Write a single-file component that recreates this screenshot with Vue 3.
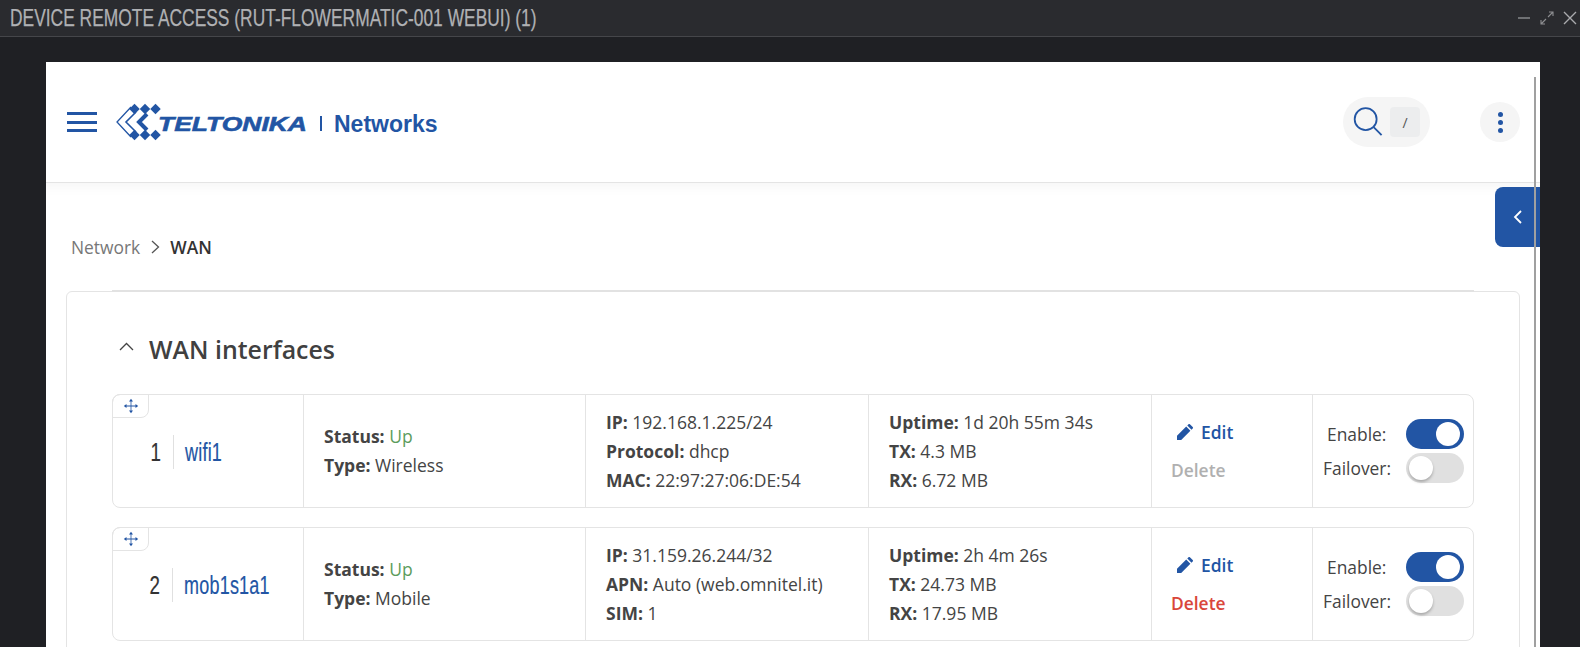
<script setup>
const rows = [
  {
    n: 1, name: 'wifi1',
    a: [['Status:', 'Up', true], ['Type:', 'Wireless']],
    b: [['IP:', '192.168.1.225/24'], ['Protocol:', 'dhcp'], ['MAC:', '22:97:27:06:DE:54']],
    c: [['Uptime:', '1d 20h 55m 34s'], ['TX:', '4.3 MB'], ['RX:', '6.72 MB']],
    del: false
  },
  {
    n: 2, name: 'mob1s1a1',
    a: [['Status:', 'Up', true], ['Type:', 'Mobile']],
    b: [['IP:', '31.159.26.244/32'], ['APN:', 'Auto (web.omnitel.it)'], ['SIM:', '1']],
    c: [['Uptime:', '2h 4m 26s'], ['TX:', '24.73 MB'], ['RX:', '17.95 MB']],
    del: true
  }
]
const diamonds = [[134.5, 109], [145, 109], [155.5, 109], [134.5, 135], [145, 135], [155.5, 135]]
</script>

<template>
  <div class="root">
    <div class="titlebar">
      <span class="title">DEVICE REMOTE ACCESS (RUT-FLOWERMATIC-001 WEBUI) (1)</span>
      <div class="winbtns">
        <svg width="14" height="14" viewBox="0 0 14 14"><path d="M1 7h12" stroke="#8d8e91" stroke-width="1.4" /></svg>
        <svg width="14" height="14" viewBox="0 0 14 14" fill="none" stroke="#8d8e91" stroke-width="1.1"><path d="M8 6l5-5M9 1h4v4M6 8l-5 5M1 9v4h4" /></svg>
        <svg width="14" height="14" viewBox="0 0 14 14"><path d="M1 1l12 12M13 1L1 13" stroke="#a9aaad" stroke-width="1.4" /></svg>
      </div>
    </div>
    <div class="stage">
      <div class="panel">
        <header class="head">
          <div class="burger"><i></i><i></i><i></i></div>
          <div class="logo">
            <svg class="mark" width="46" height="40" viewBox="115 102 46 40">
              <g fill="#2255a4">
                <rect v-for="(d, i) in diamonds" :key="i" :x="d[0] - 3.7" :y="d[1] - 3.7" width="7.4" height="7.4" :transform="`rotate(45 ${d[0]} ${d[1]})`" />
              </g>
              <g fill="none" stroke="#2255a4">
                <path d="M131 107L117 122l14 15" stroke-width="1.3" />
                <path d="M136 112L126 122l10 10" stroke-width="1.6" />
                <path d="M147 114L139 122l8 8" stroke-width="4" />
              </g>
            </svg>
            <span class="brand"><span class="brand-in">TELTONIKA</span></span>
            <span class="sep"></span>
            <span class="net">Networks</span>
          </div>
          <div class="spacer"></div>
          <div class="search">
            <svg width="30" height="30" viewBox="0 0 32 32" fill="none" stroke="#2255a4" stroke-width="1.9"><circle cx="13.5" cy="13" r="11.7" /><path d="M22 21.500l8.500 8.500" /></svg>
            <span class="slash">/</span>
          </div>
          <div class="more"><i></i><i></i><i></i></div>
        </header>
        <div class="content">
          <nav class="crumbs">
            <span class="c1">Network</span>
            <svg width="10" height="14" viewBox="0 0 10 14" fill="none" stroke="#555" stroke-width="1.3"><path d="M2 1l6.500 6L2 13" /></svg>
            <span class="c2">WAN</span>
          </nav>
          <section class="card">
            <div class="topline"></div>
            <h2 class="h"><svg width="15" height="9" viewBox="0 0 15 9" fill="none" stroke="#444" stroke-width="1.3"><path d="M1 8l6.500-6.500L14 8" /></svg><span>WAN interfaces</span></h2>
            <div v-for="r in rows" :key="r.n" class="row">
              <div class="cell first">
                <div class="drag">
                  <svg width="16" height="16" viewBox="0 0 16 16" fill="#2255a4"><path d="M7.600 3h.8v10h-.8zM3 7.600h10v.8H3z" /><path d="M8 .8l2 2.700H6zM8 15.200l2-2.700H6zM.8 8l2.700-2v4zM15.200 8l-2.700-2v4z" /></svg>
                </div>
                <div class="num"><span>{{ r.n }}</span></div>
                <span class="name">{{ r.name }}</span>
              </div>
              <div class="cell info">
                <div v-for="l in r.a" :key="l[0]"><b>{{ l[0] }}</b> <span :class="{ up: l[2] }">{{ l[1] }}</span></div>
              </div>
              <div class="cell info">
                <div v-for="l in r.b" :key="l[0]"><b>{{ l[0] }}</b> {{ l[1] }}</div>
              </div>
              <div class="cell info">
                <div v-for="l in r.c" :key="l[0]"><b>{{ l[0] }}</b> {{ l[1] }}</div>
              </div>
              <div class="cell actions">
                <div class="edit">
                  <svg width="16" height="16" viewBox="0 0 16 16" fill="#2255a4"><path d="M0 16v-4.200L9.200 2.600l4.200 4.200L4.200 16zM10.300 1.500L11.500.3a1 1 0 0 1 1.400 0l2.800 2.800a1 1 0 0 1 0 1.400l-1.200 1.200z" /></svg>
                  <span>Edit</span>
                </div>
                <div class="del" :class="{ on: r.del }">Delete</div>
              </div>
              <div class="cell toggles">
                <div class="tg"><span class="lab l1">Enable:</span><span class="sw on"><i></i></span></div>
                <div class="tg"><span class="lab">Failover:</span><span class="sw"><i></i></span></div>
              </div>
            </div>
          </section>
        </div>
        <div class="tab"><svg width="10" height="14" viewBox="0 0 10 14" fill="none" stroke="#fff" stroke-width="1.8"><path d="M8 1L2 7l6 6" /></svg></div>
        <div class="scroll"></div>
      </div>
    </div>
  </div>
</template>

<style scoped>
.root { width: 1580px; height: 647px; overflow: hidden; background: #1f2024; display: flex; flex-direction: column; font-family: "Open Sans", sans-serif; color: #404040; }
.titlebar { height: 36px; flex: none; background: #2a2b2f; border-bottom: 1px solid #45464a; display: flex; align-items: center; justify-content: space-between; padding: 0 3px 0 10px; }
.title { display: inline-block; font-family: "Liberation Sans", sans-serif; font-size: 24px; color: #b0b1b4; white-space: nowrap; transform: scaleX(0.725); transform-origin: left center; width: 530px; -webkit-text-stroke: 0.25px #b0b1b4; }
.winbtns { display: flex; gap: 9px; align-items: center; margin-top: -1px; }
.stage { flex: 1; padding: 25px 40px 0 46px; min-height: 0; }
.panel { position: relative; height: 100%; background: #fff; overflow: hidden; }
.head { height: 120px; border-bottom: 1px solid #e4e4e4; display: flex; align-items: center; padding: 0 20px 0 21px; }
.burger { width: 30px; height: 20px; display: flex; flex-direction: column; justify-content: space-between; }
.burger i { display: block; height: 3px; background: #2255a4; }
.logo { display: flex; align-items: center; margin-left: 18px; color: #2255a4; padding-top: 1px; }
.mark { margin-top: -1px; }
.brand { width: 151px; margin-left: -3px; padding-top: 2px; font-family: "Liberation Sans", sans-serif; font-style: italic; font-weight: 700; font-size: 21px; white-space: nowrap; }
.brand-in { display: inline-block; transform: scaleX(1.26); transform-origin: left center; -webkit-text-stroke: 0.6px #2255a4; }
.sep { width: 2px; height: 15px; margin: 2px 12px 0 11px; background: #2255a4; }
.net { font-family: "Liberation Sans", sans-serif; font-weight: 700; font-size: 23px; padding-top: 3px; }
.spacer { flex: 1; }
.search { width: 87px; height: 50px; border-radius: 25px; background: #f5f5f5; display: flex; align-items: center; padding-left: 10px; gap: 7px; box-sizing: border-box; }
.slash { width: 30px; height: 30px; border-radius: 4px; background: #ecedee; font-size: 14px; display: flex; align-items: center; justify-content: center; color: #555; }
.more { width: 40px; height: 40px; border-radius: 50%; background: #f5f5f5; margin-left: 50px; display: flex; flex-direction: column; align-items: center; justify-content: center; gap: 3px; }
.more i { width: 5px; height: 5px; border-radius: 50%; background: #2255a4; }
.content { padding: 50px 20px 0 20px; box-shadow: inset 0 16px 14px -14px rgba(0, 0, 0, 0.05); }
.crumbs { display: flex; align-items: center; height: 28px; padding-left: 5px; font-size: 17.4px; gap: 10px; margin-bottom: 30px; }
.c1 { color: #777; }
.c2 { font-weight: 600; color: #333; }
.card { position: relative; border: 1px solid #e4e4e4; border-radius: 6px; padding: 0 45px; height: 500px; box-sizing: border-box; }
.topline { position: absolute; left: 45px; right: 45px; top: -2px; height: 2px; background: #e2e2e2; }
.h { display: flex; align-items: center; height: 36px; margin: 39px 0 27px; font-size: 24.9px; font-weight: 600; color: #404040; }
.h svg { margin: 0 15px 5px 7px; }
.row { display: grid; grid-template-columns: 191px 282px 283px 283px 161px 1fr; height: 114px; box-sizing: border-box; border: 1px solid #e4e4e4; border-radius: 8px; margin-bottom: 19px; }
.cell { border-right: 1px solid #e4e4e4; min-width: 0; }
.cell:last-child { border-right: 0; }
.first { position: relative; display: flex; align-items: center; padding-top: 2px; font-family: "Liberation Sans", sans-serif; font-size: 25px; -webkit-text-stroke: 0.2px currentColor; }
.drag { position: absolute; left: -1px; top: -1px; width: 35px; height: 22px; border: 1px solid #e4e4e4; border-radius: 8px 0 8px 0; display: flex; align-items: center; justify-content: center; -webkit-text-stroke: 0; }
.num { width: 61px; padding-right: 12px; box-sizing: border-box; text-align: right; height: 34px; line-height: 34px; border-right: 1px solid #e0e0e0; color: #333; }
.num span { display: inline-block; transform: scaleX(0.75); transform-origin: right center; }
.name { margin-left: 11px; color: #2255a4; transform: scaleX(0.72); transform-origin: left center; white-space: nowrap; letter-spacing: 0.3px; }
.info { display: flex; flex-direction: column; justify-content: center; padding: 0 0 0 20px; font-size: 17.5px; line-height: 29px; color: #444; white-space: nowrap; }
.info b { font-weight: 700; }
.up { color: #5c9c5c; }
.actions { padding: 22px 0 0 19px; font-size: 17.4px; font-weight: 600; }
.edit { display: flex; align-items: center; gap: 8px; height: 30px; color: #2255a4; padding-left: 6px; }
.del { margin-top: 8px; line-height: 30px; color: #b0b0b0; }
.del.on { color: #d9463a; }
.toggles { display: flex; flex-direction: column; justify-content: center; gap: 4px; padding-left: 10px; padding-top: 0; }
.tg { display: flex; align-items: center; justify-content: space-between; height: 30px; font-size: 17.4px; padding-right: 9px; }
.lab { color: #444; }
.l1 { margin-left: 4px; }
.sw { position: relative; width: 58px; height: 30px; border-radius: 15px; background: #e0e0e0; }
.sw i { position: absolute; left: 3px; top: 3px; width: 24px; height: 24px; border-radius: 50%; background: #fff; box-shadow: 0 2px 3px rgba(0, 0, 0, 0.25); }
.sw.on { background: #2255a4; }
.sw.on i { left: 30px; box-shadow: none; }
.tab { position: absolute; right: 0; top: 125px; width: 45px; height: 60px; border-radius: 8px 0 0 8px; background: #2255a4; display: flex; align-items: center; padding-left: 18px; box-sizing: border-box; }
.scroll { position: absolute; right: 4px; top: 15px; bottom: 0; width: 2px; background: #a0a0a0; }
</style>
